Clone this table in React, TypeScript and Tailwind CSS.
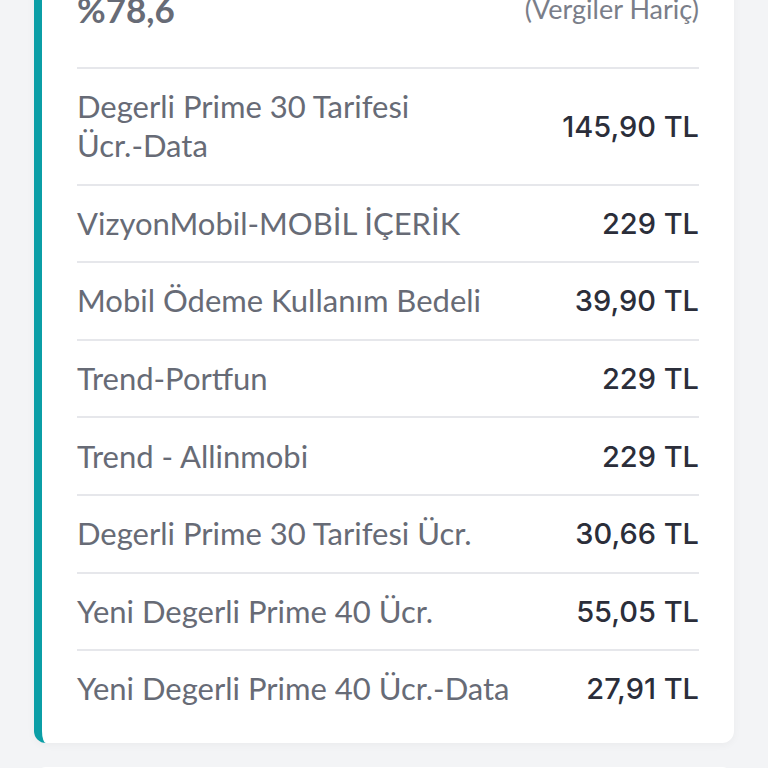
const ITEMS = [
  { label: "Degerli Prime 30 Tarifesi Ücr.-Data", value: "145,90 TL" },
  { label: "VizyonMobil-MOBİL İÇERİK", value: "229 TL" },
  { label: "Mobil Ödeme Kullanım Bedeli", value: "39,90 TL" },
  { label: "Trend-Portfun", value: "229 TL" },
  { label: "Trend - Allinmobi", value: "229 TL" },
  { label: "Degerli Prime 30 Tarifesi Ücr.", value: "30,66 TL" },
  { label: "Yeni Degerli Prime 40 Ücr.", value: "55,05 TL" },
  { label: "Yeni Degerli Prime 40 Ücr.-Data", value: "27,91 TL" },
];

// keep hyphenated words together so "Ücr.-Data" wraps as one word
function Label({ text }: { text: string }) {
  const words = text.split(" ");
  return (
    <>
      {words.map((w, i) => (
        <span key={i}>
          <span className="whitespace-nowrap">{w}</span>
          {i < words.length - 1 ? " " : ""}
        </span>
      ))}
    </>
  );
}

export default function App() {
  return (
    <div className="min-h-screen overflow-hidden bg-[#f3f4f6] font-['Lato','Noto_Sans',sans-serif]">
      {/* Invoice card */}
      <div className="ml-[34px] w-[700px] rounded-b-xl border-l-8 border-[#0b9ea6] bg-white px-[35px] pb-4 shadow-[0_2px_8px_rgba(0,0,0,0.04)]">
        <div className="-mt-[13px] flex items-center justify-between border-b-2 border-[#e6e7eb] pb-[36px]">
          <span className="text-[35px] leading-[44px] font-bold text-[#676b76]">%78,6</span>
          <span className="text-[27px] leading-[44px] text-[#7a7e89]">(Vergiler Hariç)</span>
        </div>

        <ul>
          {ITEMS.map((item, i) => (
            <li
              key={item.label}
              className={`flex items-center justify-between gap-6 py-[18.3px] ${
                i < ITEMS.length - 1 ? "border-b-2 border-[#e6e7eb]" : ""
              }`}
            >
              <span className="max-w-[450px] min-w-0 flex-1 text-[31px] leading-[39px] text-[#676b76]">
                <Label text={item.label} />
              </span>
              <span className="shrink-0 font-['Inter',sans-serif] text-[29px] leading-[39px] font-medium text-[#2b2e3a]">
                {item.value}
              </span>
            </li>
          ))}
        </ul>
      </div>

      {/* Next card peeking in */}
      <div className="mt-6 ml-[34px] h-20 w-[700px] rounded-t-xl bg-white" />
    </div>
  );
}
